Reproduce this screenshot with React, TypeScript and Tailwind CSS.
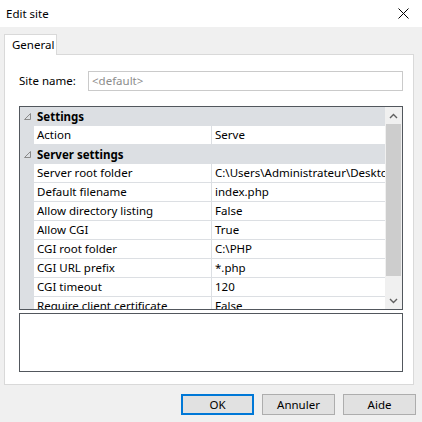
import React from "react";

type Row =
  | { kind: "cat"; label: string }
  | { kind: "prop"; name: string; value: string };

const rows: Row[] = [
  { kind: "cat", label: "Settings" },
  { kind: "prop", name: "Action", value: "Serve" },
  { kind: "cat", label: "Server settings" },
  { kind: "prop", name: "Server root folder", value: "C:\\Users\\Administrateur\\Desktop\\www" },
  { kind: "prop", name: "Default filename", value: "index.php" },
  { kind: "prop", name: "Allow directory listing", value: "False" },
  { kind: "prop", name: "Allow CGI", value: "True" },
  { kind: "prop", name: "CGI root folder", value: "C:\\PHP" },
  { kind: "prop", name: "CGI URL prefix", value: "*.php" },
  { kind: "prop", name: "CGI timeout", value: "120" },
  { kind: "prop", name: "Require client certificate", value: "False" },
];

function Tri() {
  return (
    <svg width="7" height="7" viewBox="0 0 7 7" className="block">
      <path d="M6.5 0.5 L6.5 6.5 L0.5 6.5 Z" fill="none" stroke="#8a8a8a" strokeWidth="1" />
    </svg>
  );
}

export default function App() {
  return (
    <div
      className="w-[422px] h-[422px] bg-[#f0f0f0] flex flex-col text-[11.5px] text-black overflow-hidden"
      style={{ fontFamily: '"Noto Sans", "Liberation Sans", sans-serif' }}
    >
      {/* Title bar */}
      <div className="h-[27px] bg-white flex items-center justify-between pl-[6px] pr-[13px] shrink-0">
        <span className="leading-none">Edit site</span>
        <svg width="11" height="11" viewBox="0 0 11 11">
          <path d="M0.5 0.5 L10.5 10.5 M10.5 0.5 L0.5 10.5" stroke="#000" strokeWidth="1" />
        </svg>
      </div>

      {/* Tabs */}
      <div className="pl-[4px] pr-[8px] pt-[7px] flex flex-col">
        <div className="flex">
          <div className="relative z-10 h-[21px] w-[53px] bg-white border border-b-0 border-[#d9d9d9] flex items-center pl-[7px] leading-none">
            General
          </div>
        </div>
        <div className="-mt-px h-[331px] bg-white border border-[#d9d9d9] flex flex-col pl-[14px] pr-[10px] pt-[16px]">
          {/* Site name */}
          <div className="flex items-center h-[20px]">
            <span className="w-[69px] leading-none">Site name:</span>
            <div className="flex-1 h-[20px] border border-[#cacaca] flex items-center pl-[3px] text-[#8c8c8c] leading-none">
              &lt;default&gt;
            </div>
          </div>

          {/* Property grid */}
          <div className="mt-[15px] h-[204px] border border-[#52575d] flex">
            <div className="flex-1 overflow-hidden flex flex-col">
              {rows.map((r, i) =>
                r.kind === "cat" ? (
                  <div key={i} className="h-[19px] shrink-0 bg-[#dcdfe3] flex items-center">
                    <div className="w-[14px] flex justify-center pl-px">
                      <Tri />
                    </div>
                    <span className="pl-[3px] font-bold leading-none">{r.label}</span>
                  </div>
                ) : (
                  <div key={i} className="h-[19px] shrink-0 flex bg-[#dcdfe3]">
                    <div className="w-[14px]" />
                    <div className="w-[178px] bg-white border-b border-r border-[#dcdfe3] flex items-center pl-[3px] whitespace-nowrap overflow-hidden leading-none">
                      {r.name}
                    </div>
                    <div className="flex-1 bg-white border-b border-[#dcdfe3] flex items-center pl-[3px] whitespace-nowrap overflow-hidden leading-none">
                      {r.value}
                    </div>
                  </div>
                )
              )}
            </div>
            {/* Scrollbar */}
            <div className="w-[17px] bg-[#f0f0f0] flex flex-col">
              <div className="h-[17px] flex items-center justify-center">
                <svg width="9" height="6" viewBox="0 0 9 6">
                  <path d="M1 5 L4.5 1.5 L8 5" fill="none" stroke="#606060" strokeWidth="1.4" />
                </svg>
              </div>
              <div className="h-[152px] mx-px bg-[#cdcdcd]" />
              <div className="flex-1" />
              <div className="h-[17px] flex items-center justify-center">
                <svg width="9" height="6" viewBox="0 0 9 6">
                  <path d="M1 1 L4.5 4.5 L8 1" fill="none" stroke="#606060" strokeWidth="1.4" />
                </svg>
              </div>
            </div>
          </div>

          {/* Description */}
          <div className="mt-[3px] h-[59px] border border-[#52575d] bg-white" />
        </div>
      </div>

      {/* Buttons */}
      <div className="flex justify-end gap-[8px] pr-[6px] pt-[9px]">
        <button className="w-[73px] h-[21px] bg-[#e1e1e1] border-2 border-[#0078d7] flex items-center justify-center leading-none">
          OK
        </button>
        <button className="w-[73px] h-[21px] bg-[#e1e1e1] border border-[#adadad] flex items-center justify-center leading-none">
          Annuler
        </button>
        <button className="w-[73px] h-[21px] bg-[#e1e1e1] border border-[#adadad] flex items-center justify-center leading-none">
          Aide
        </button>
      </div>
    </div>
  );
}
